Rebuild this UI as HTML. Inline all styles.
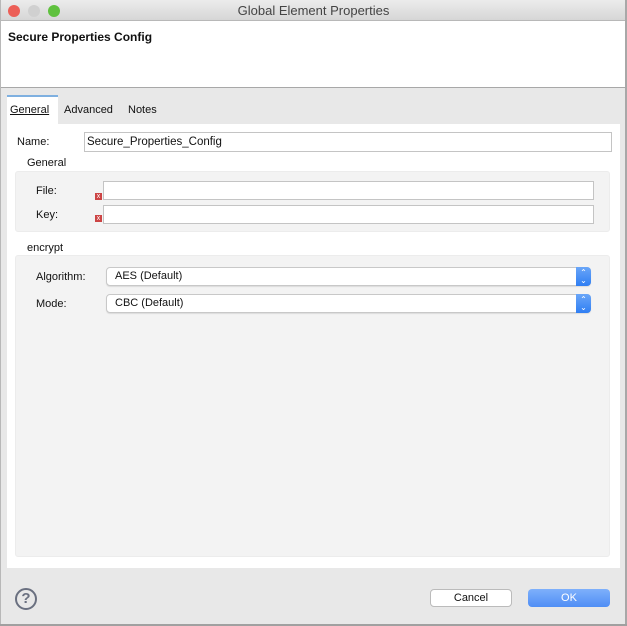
<!DOCTYPE html>
<html><head><style>
*{box-sizing:border-box;margin:0;padding:0}
body{width:627px;height:626px;background:#e8e8e8;font-family:"Liberation Sans",sans-serif;font-size:12px;color:#111;position:relative;overflow:hidden}
.a{position:absolute}
.inp{position:absolute;background:#fff;border:1px solid #c4c4c4}
.lbl{position:absolute;font-size:11px}
.sel{position:absolute;background:#fff;border:1px solid #c8c8c8;border-radius:4px;box-shadow:0 1px 1px rgba(0,0,0,.1)}
.sel span{position:absolute;left:8px;top:2px}
.sel i{position:absolute;right:-1px;top:-1px;width:15px;height:19px;background:linear-gradient(#6aa6f8,#2f7ef3);border-radius:0 4px 4px 0;color:#fff;font-style:normal;font-size:8px;line-height:8px;text-align:center;padding-top:2px}
.err{position:absolute;width:7px;height:7px;background:#c44;color:#fff;font-size:7px;line-height:7px;text-align:center}
</style></head><body>
<div class="a" style="left:0;top:0;width:627px;height:21px;background:linear-gradient(#ececec,#d6d6d6);border-bottom:1px solid #b8b8b8"></div>
<div class="a" style="left:8px;top:5px;width:12px;height:12px;border-radius:50%;background:#ec5f57"></div>
<div class="a" style="left:28px;top:5px;width:12px;height:12px;border-radius:50%;background:#d0d0d0"></div>
<div class="a" style="left:48px;top:5px;width:12px;height:12px;border-radius:50%;background:#5fc13e"></div>
<div class="a" style="left:0;top:3px;width:627px;text-align:center;font-size:13px;color:#444">Global Element Properties</div>
<div class="a" style="left:1px;top:21px;width:625px;height:67px;background:#fff;border-bottom:1px solid #a8a8a8"></div>
<div class="a" style="left:8px;top:30px;font-weight:bold;font-size:12px">Secure Properties Config</div>
<div class="a" style="left:7px;top:95px;width:51px;height:30px;background:#fff;border-top:2px solid #7fb0e0"></div>
<div class="a" style="left:10px;top:104px;text-decoration:underline;font-size:11px">General</div>
<div class="a" style="left:64px;top:104px;font-size:11px">Advanced</div>
<div class="a" style="left:128px;top:104px;font-size:11px">Notes</div>
<div class="a" style="left:7px;top:124px;width:613px;height:444px;background:#fff"></div>
<div class="lbl" style="left:17px;top:136px">Name:</div>
<div class="inp" style="left:84px;top:132px;width:528px;height:20px"><span style="position:absolute;left:2px;top:3px;font-size:11.5px">Secure_Properties_Config</span></div>
<div class="lbl" style="left:27px;top:157px">General</div>
<div class="a" style="left:15px;top:171px;width:595px;height:61px;background:#f3f3f3;border-radius:3px;border:1px solid #ececec"></div>
<div class="lbl" style="left:36px;top:185px">File:</div>
<div class="err" style="left:95px;top:193px">x</div>
<div class="inp" style="left:103px;top:181px;width:491px;height:19px"></div>
<div class="lbl" style="left:36px;top:209px">Key:</div>
<div class="err" style="left:95px;top:215px">x</div>
<div class="inp" style="left:103px;top:205px;width:491px;height:19px"></div>
<div class="lbl" style="left:27px;top:242px">encrypt</div>
<div class="a" style="left:15px;top:255px;width:595px;height:302px;background:#f3f3f3;border-radius:3px;border:1px solid #ececec"></div>
<div class="lbl" style="left:36px;top:271px">Algorithm:</div>
<div class="sel" style="left:106px;top:267px;width:485px;height:19px"><span style="top:2px;font-size:11px">AES (Default)</span><i>⌃<br>⌄</i></div>
<div class="lbl" style="left:36px;top:298px">Mode:</div>
<div class="sel" style="left:106px;top:294px;width:485px;height:19px"><span style="top:2px;font-size:11px">CBC (Default)</span><i>⌃<br>⌄</i></div>
<div class="a" style="left:15px;top:588px;width:22px;height:22px;border-radius:50%;border:2px solid #6a7080;color:#6a7080;font-weight:bold;font-size:15px;text-align:center;line-height:18px">?</div>
<div class="a" style="left:430px;top:589px;width:82px;height:18px;background:#fff;border:1px solid #bbb;border-radius:4px;text-align:center;font-size:11px;line-height:17px">Cancel</div>
<div class="a" style="left:528px;top:589px;width:82px;height:18px;background:linear-gradient(#7eb0fb,#4f8ef5);border-radius:4px;text-align:center;font-size:11px;line-height:19px;color:#fff">OK</div>
<div class="a" style="left:0;top:0;width:1px;height:626px;background:#b8b8b8"></div>
<div class="a" style="right:0;top:0;width:2px;height:626px;background:#a8a8a8"></div>
<div class="a" style="left:0;bottom:0;width:627px;height:2px;background:#a0a0a0"></div>
</body></html>
